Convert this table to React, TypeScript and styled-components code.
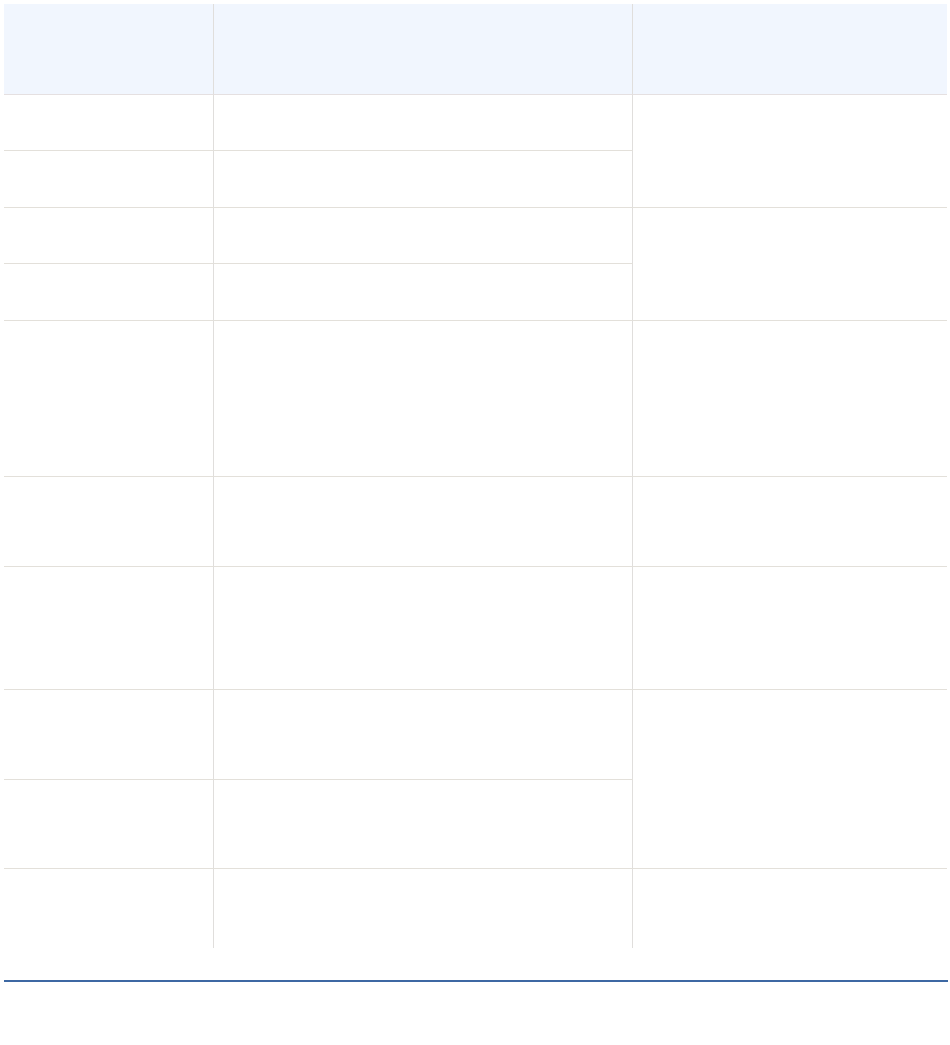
import React from 'react';
import styled, { createGlobalStyle } from 'styled-components';

const GlobalStyle = createGlobalStyle`
  body {
    margin: 0;
    background: #ffffff;
    font-family: "Liberation Sans", Arial, sans-serif;
  }
`;

const Page = styled.div`
  width: 943px;
  padding: 4px;
  display: flex;
  flex-direction: column;
  gap: 32px;
`;

const Table = styled.div`
  display: grid;
  grid-template-columns: 210px 419px 314px;
  grid-template-rows: 91px 56px 57px 56px 57px 156px 90px 123px 90px 89px 79px;
`;

const HeadCell = styled.div<{ $last?: boolean }>`
  box-sizing: border-box;
  background: #f1f6fe;
  border-bottom: 1px solid #e5e0e1;
  border-right: ${(p) => (p.$last ? 'none' : '1px solid #e0dedc')};
`;

const Cell = styled.div<{ $last?: boolean; $span?: number; $bottom?: boolean }>`
  box-sizing: border-box;
  background: #ffffff;
  grid-row: ${(p) => (p.$span ? `span ${p.$span}` : 'auto')};
  border-bottom: ${(p) => (p.$bottom ? 'none' : '1px solid #e3e0da')};
  border-right: ${(p) => (p.$last ? 'none' : '1px solid #e0dedc')};
`;

const Rule = styled.hr`
  margin: 0;
  border: none;
  height: 2px;
  width: 944px;
  background: #3d68a3;
`;

// rows: span of the third column for each group
const groups = [
  { rows: 2 },
  { rows: 2 },
  { rows: 1 },
  { rows: 1 },
  { rows: 1 },
  { rows: 2 },
  { rows: 1, end: true },
];

const App = () => {
  return (
    <Page>
      <GlobalStyle />
      <Table>
        <HeadCell />
        <HeadCell />
        <HeadCell $last />
        {groups.map((g, gi) =>
          Array.from({ length: g.rows }).map((_, ri) => (
            <React.Fragment key={`${gi}-${ri}`}>
              <Cell $bottom={g.end} />
              <Cell $bottom={g.end} />
              {ri === 0 && <Cell $last $span={g.rows > 1 ? g.rows : undefined} $bottom={g.end} />}
            </React.Fragment>
          ))
        )}
      </Table>
      <Rule />
    </Page>
  );
};

export default App;
